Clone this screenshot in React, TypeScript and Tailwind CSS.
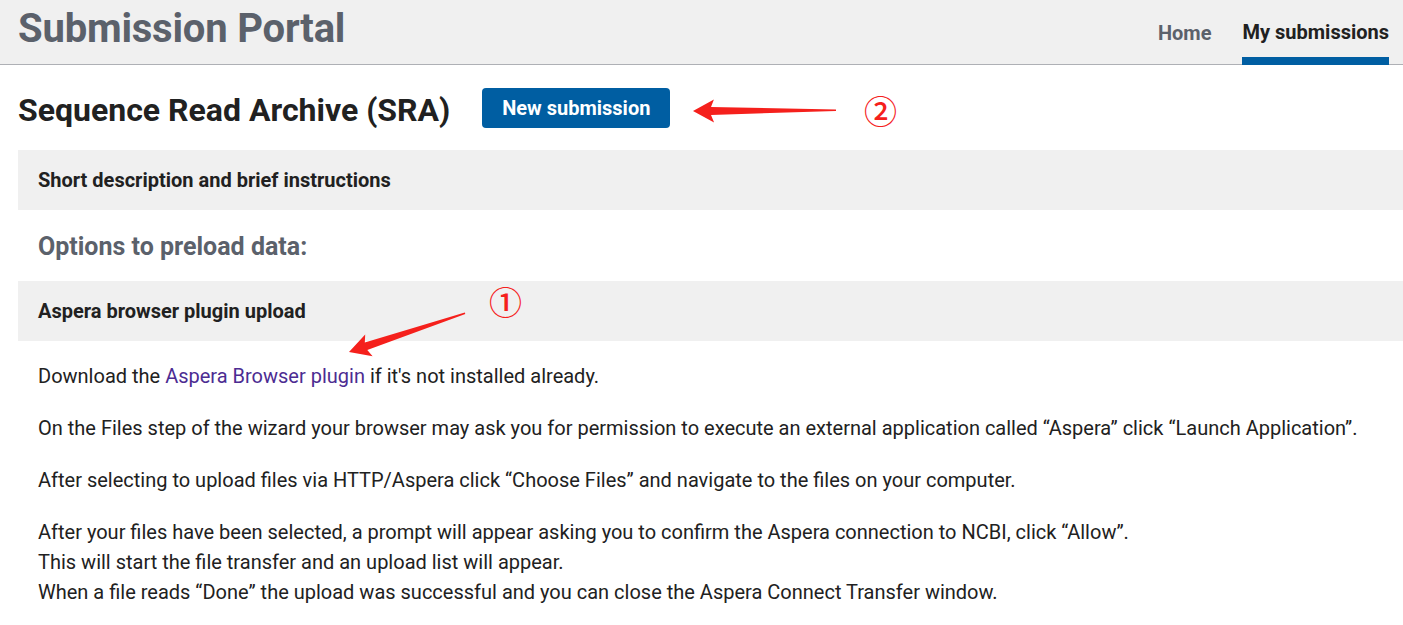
const paragraphs = [
  ["On the Files step of the wizard your browser may ask you for permission to execute an external application called \u201cAspera\u201d click \u201cLaunch Application\u201d."],
  ["After selecting to upload files via HTTP/Aspera click \u201cChoose Files\u201d and navigate to the files on your computer."],
  [
    "After your files have been selected, a prompt will appear asking you to confirm the Aspera connection to NCBI, click \u201cAllow\u201d.",
    "This will start the file transfer and an upload list will appear.",
    "When a file reads \u201cDone\u201d the upload was successful and you can close the Aspera Connect Transfer window.",
  ],
];

// tapered red annotation arrow, tip at (x1,y1)
const arrowPoints = (x0: number, y0: number, x1: number, y1: number) => {
  const dx = x0 - x1;
  const dy = y0 - y1;
  const len = Math.hypot(dx, dy);
  const ux = dx / len;
  const uy = dy / len;
  const nx = -uy;
  const ny = ux;
  const head = 21;
  const p = (a: number, b: number) => `${(x1 + ux * a + nx * b).toFixed(1)},${(y1 + uy * a + ny * b).toFixed(1)}`;
  return [
    p(0, 0),
    p(head, 11.5),
    p(head - 3, 4),
    p(len, 1),
    p(len, -0.5),
    p(head - 3, -4),
    p(head, -11.5),
  ].join(" ");
};

const Annotations = () => (
  <>
    <svg className="absolute left-0 top-0 pointer-events-none" width="1403" height="625">
      <polygon points={arrowPoints(836, 110, 693, 111)} fill="#f5201c" />
      <polygon points={arrowPoints(465, 313, 349, 352)} fill="#f5201c" />
    </svg>
    <span className="absolute left-[864px] top-[92px] text-[33px] leading-[36px] font-medium text-[#f5201c] font-['Noto_Sans_CJK_SC',sans-serif]">
      ②
    </span>
    <span className="absolute left-[489px] top-[283px] text-[33px] leading-[36px] font-medium text-[#f5201c] font-['Noto_Sans_CJK_SC',sans-serif]">
      ①
    </span>
  </>
);

export default function App() {
  return (
    <div className="relative min-h-screen bg-white font-['Roboto',sans-serif] text-[#212121] overflow-hidden">
      <header className="h-[65px] bg-[#f0f0f0] border-b border-[#aeb0b5] flex items-stretch justify-between pl-[18px] pr-[14px]">
        <h1 className="text-[40px] font-bold text-[#5b616b] leading-none pt-[9px] tracking-[-0.2px]">Submission Portal</h1>
        <nav className="flex items-stretch gap-[31px]">
          <a className="flex items-center pt-[2px] text-[20px] font-bold text-[#5b616b]">Home</a>
          <a className="flex items-center text-[20px] font-bold text-[#212121] border-b-[8px] border-[#005ea2] mb-[-1px] pt-[6px]">
            My submissions
          </a>
        </nav>
      </header>

      <main className="pl-[18px]">
        <div className="flex items-center gap-[32px] mt-[23px] h-[40px]">
          <h2 className="text-[32px] font-bold leading-none mt-[3px]">Sequence Read Archive (SRA)</h2>
          <button className="h-[40px] w-[188px] rounded-[4px] bg-[#005ea2] text-white text-[20px] font-bold">
            New submission
          </button>
        </div>

        <div className="mt-[22px] h-[60px] bg-[#f0f0f0] flex items-center px-[20px]">
          <h3 className="text-[20px] font-bold">Short description and brief instructions</h3>
        </div>

        <h3 className="pl-[20px] mt-[22px] mb-[19px] text-[25px] leading-[30px] font-bold text-[#5b616b]">Options to preload data:</h3>

        <div className="h-[60px] bg-[#f0f0f0] flex items-center px-[20px]">
          <h4 className="text-[20px] font-bold">Aspera browser plugin upload</h4>
        </div>

        <div className="pl-[20px] pt-[20px] text-[20px] leading-[30px] flex flex-col gap-[22px]">
          <p>
            Download the <a className="text-[#4c2c92]">Aspera Browser plugin</a> if it's not installed already.
          </p>
          {paragraphs.map((lines, i) => (
            <p key={i}>
              {lines.map((line, j) => (
                <span key={j} className="block">
                  {line}
                </span>
              ))}
            </p>
          ))}
        </div>
      </main>

      <Annotations />
    </div>
  );
}
